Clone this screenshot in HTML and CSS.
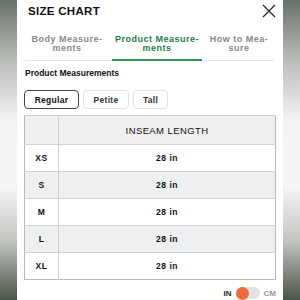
FILE: index.html
```html
<!DOCTYPE html>
<html lang="en">
<head>
  <meta charset="UTF-8" />
  <title>Size Chart</title>
  <link rel="stylesheet" href="styles.css">
</head>
<body>

<div class="modal">
  <div class="header">
    <h2>SIZE CHART</h2>
    <svg class="close" width="14" height="14" viewBox="0 0 14 14">
      <path d="M1 1 L13 13 M13 1 L1 13" stroke="#222" stroke-width="1.2" fill="none" />
    </svg>
  </div>

  <div class="tabs">
    <div class="tab">Body Measure-<br>ments</div>
    <div class="tab active">Product Measure-<br>ments</div>
    <div class="tab">How to Mea-<br>sure</div>
  </div>

  <h4>Product Measurements</h4>

  <div class="fits">
    <button class="fit selected">Regular</button>
    <button class="fit">Petite</button>
    <button class="fit">Tall</button>
  </div>

  <table>
    <thead>
      <tr><th class="size"></th><th>INSEAM LENGTH</th></tr>
    </thead>
    <tbody>
      <tr><td class="size">XS</td><td>28 in</td></tr>
      <tr class="alt"><td class="size">S</td><td>28 in</td></tr>
      <tr><td class="size">M</td><td>28 in</td></tr>
      <tr class="alt"><td class="size">L</td><td>28 in</td></tr>
      <tr><td class="size">XL</td><td>28 in</td></tr>
    </tbody>
  </table>

  <div class="units">
    <span class="unit on">IN</span>
    <span class="switch"><span class="knob"></span></span>
    <span class="unit">CM</span>
  </div>
</div>

</body>
</html>
```

FILE: styles.css
```css
body {
  margin: 0;
  height: 300px;
  overflow: hidden;
  font-family: 'Liberation Sans', Arial, sans-serif;
  background: linear-gradient(#68706a 0%, #b9bcb8 20%, #f3f3f3 40%, #f5f5f5 62%, #c4c6c2 80%, #4a5447 100%);
}
.modal {
  background: white;
  margin: 0 17px;
  height: 300px;
  padding: 0 7px;
  box-sizing: border-box;
}
.header {
  display: flex;
  justify-content: space-between;
  align-items: center;
  height: 22px;
  padding: 0 0 0 4px;
}
.header h2 {
  margin: 0;
  font-size: 11.5px;
  letter-spacing: 0.3px;
  font-weight: bold;
  color: #111;
}
.close { margin-top: 0; }
.tabs {
  display: grid;
  grid-template-columns: 84px 90px 68px;
  gap: 3px;
  margin: 12px 2px 0 1px;
  border-bottom: 1px solid #e3e3e3;
}
.tab {
  text-align: center;
  font-size: 9px;
  font-weight: bold;
  letter-spacing: 0.5px;
  line-height: 9px;
  color: #8a8a8a;
  padding: 1px 0 6px;
  border-bottom: 2px solid transparent;
  margin-bottom: -1px;
}
.tab.active {
  color: #1e8043;
  border-bottom-color: #2f8f55;
}
h4 {
  margin: 7px 0 0 1px;
  font-size: 8.5px;
  color: #111;
}
.fits {
  display: flex;
  gap: 4px;
  margin-top: 12px;
}
.fit {
  background: white;
  border: 1px solid #e2e2e2;
  border-radius: 4px;
  height: 19px;
  padding: 0 6px;
  font-family: inherit;
  font-size: 8.5px;
  font-weight: bold;
  letter-spacing: 0.3px;
  color: #333;
}
.fit:first-child { width: 55px; }
.fit:nth-child(2) { width: 46px; }
.fit:nth-child(3) { width: 35px; }
.fit.selected {
  border-color: #444;
  color: #111;
}
table {
  width: 100%;
  border-collapse: collapse;
  margin-top: 6px;
  border: 1px solid #b9b9b9;
}
th, td {
  text-align: center;
  border-top: 1px solid #d2d2d2;
  padding: 0;
  font-size: 8.5px;
  color: #111;
}
th {
  background: #eeeff0;
  height: 28px;
  font-size: 9.5px;
  font-weight: normal;
  letter-spacing: 0.4px;
}
td {
  height: 26px;
  font-weight: bold;
  letter-spacing: 0.5px;
}
.size {
  width: 33px;
  border-right: 1px solid #d2d2d2;
}
.alt td { background: #eeeff0; }
.units {
  display: flex;
  justify-content: flex-end;
  align-items: center;
  gap: 4px;
  margin-top: 7px;
}
.unit {
  font-size: 8px;
  font-weight: bold;
  color: #999;
}
.unit.on { color: #222; }
.switch {
  position: relative;
  width: 24px;
  height: 12px;
  border-radius: 6px;
  background: #e2e2e2;
}
.knob {
  position: absolute;
  left: 0;
  top: -0.5px;
  width: 13px;
  height: 13px;
  border-radius: 50%;
  background: #f26b3a;
}
```
